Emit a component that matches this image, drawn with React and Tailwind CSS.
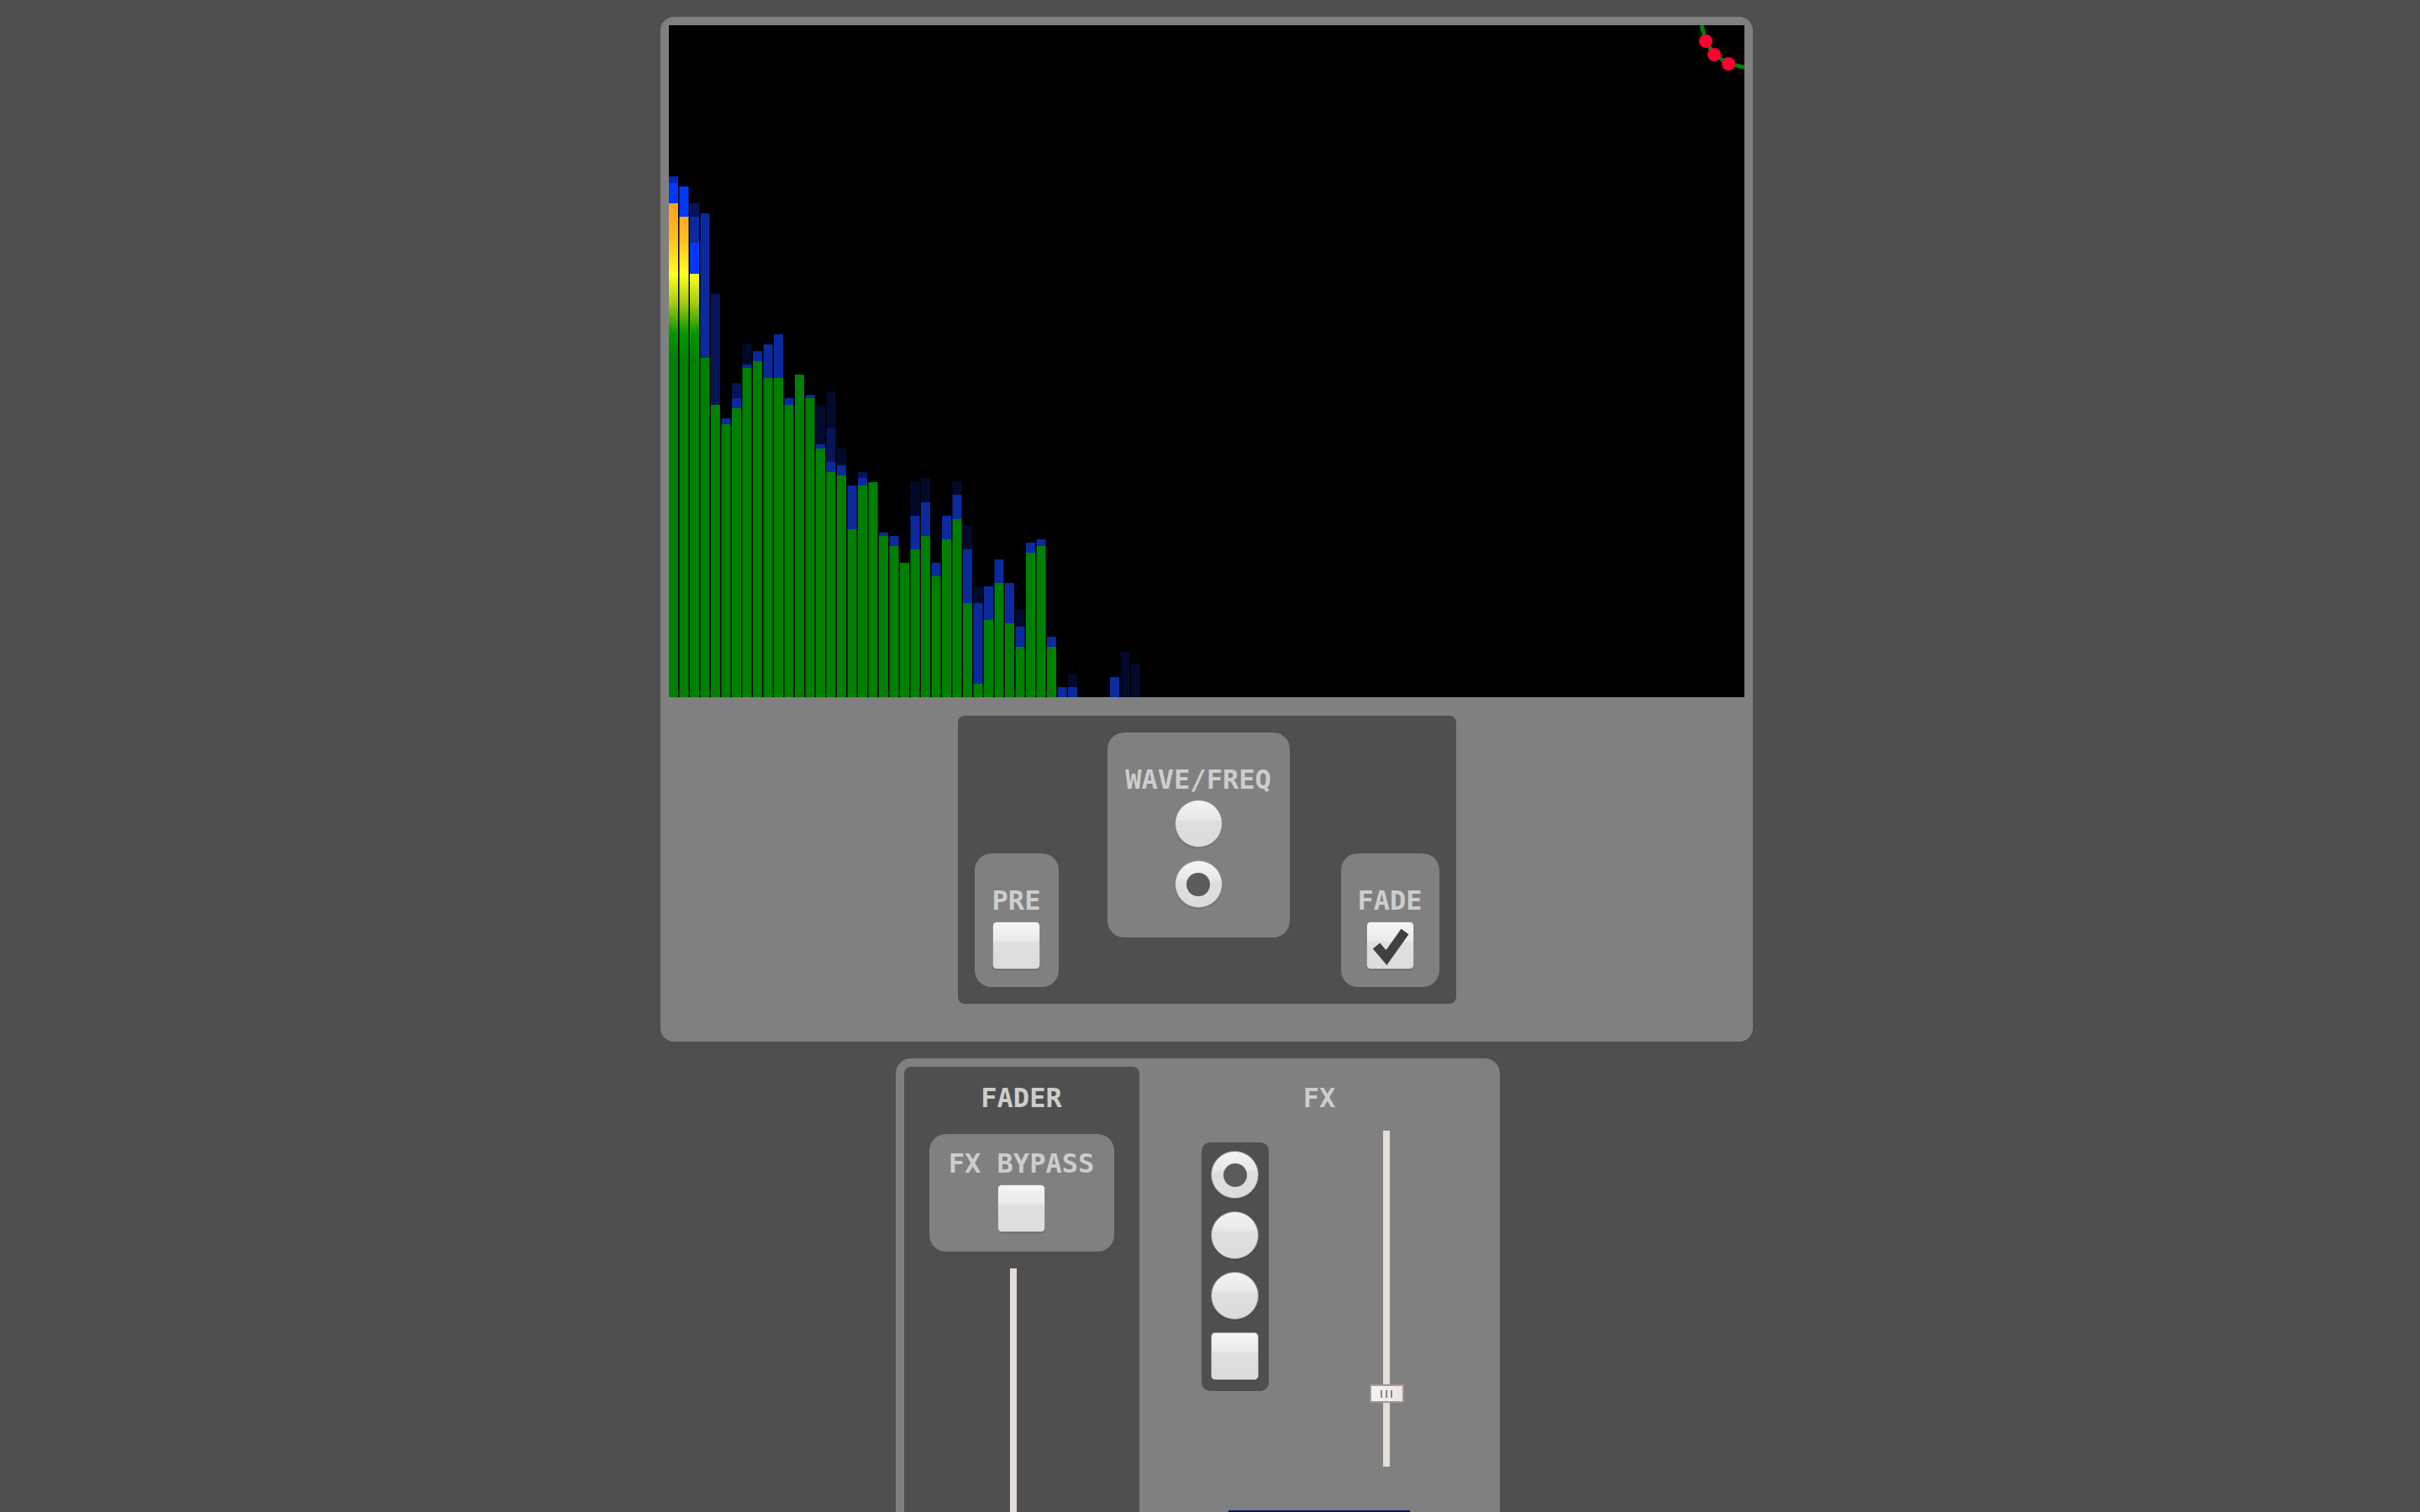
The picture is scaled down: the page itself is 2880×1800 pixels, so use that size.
import React from 'react';

const G = 'url(#spec)';
const BRIGHT = '#0038ff';
const B = '#0a2a9e';
const N = '#061458';
const D = '#020a2c';

// each bar: list of [top, fill], each segment runs to the next top (last one to the bottom)
const BARS = [
  [[180, '#0026b8'], [188, BRIGHT], [212, G]],
  [[192, BRIGHT], [228, G]],
  [[212, N], [228, B], [259, BRIGHT], [296, G]],
  [[224, B], [396, G]],
  [[320, N], [452, G]],
  [[468, B], [475, G]],
  [[426, N], [444, B], [456, G]],
  [[379, D], [404, B], [408, G]],
  [[388, B], [400, G]],
  [[380, B], [420, G]],
  [[368, B], [420, G]],
  [[444, B], [452, G]],
  [[416, G]],
  [[440, B], [444, G]],
  [[453, D], [499, B], [504, G]],
  [[436, D], [480, N], [520, B], [532, G]],
  [[504, D], [524, B], [536, G]],
  [[548, B], [600, G]],
  [[532, N], [539, B], [548, G]],
  [[544, G]],
  [[604, B], [608, G]],
  [[608, B], [620, G]],
  [[640, G]],
  [[544, D], [584, B], [624, G]],
  [[539, D], [568, B], [608, G]],
  [[640, B], [656, G]],
  [[584, B], [612, G]],
  [[544, D], [559, B], [588, G]],
  [[596, D], [624, B], [688, G]],
  [[668, D], [688, B], [784, G]],
  [[668, B], [708, G]],
  [[636, B], [664, G]],
  [[664, B], [712, G]],
  [[696, D], [716, B], [740, G]],
  [[616, B], [628, G]],
  [[612, B], [620, G]],
  [[728, B], [740, G]],
  [[788, B]],
  [[773, D], [788, B]],
  [],
  [],
  [],
  [[776, B]],
  [[746, D]],
  [[760, D]],
];

function Spectrum() {
  return (
    <svg width="1280" height="800" viewBox="0 0 1280 800" className="block bg-black">
      <defs>
        <linearGradient id="spec" gradientUnits="userSpaceOnUse" x1="0" y1="0" x2="0" y2="800">
          <stop offset={212 / 800} stopColor="#ffa020" />
          <stop offset={255 / 800} stopColor="#ffc020" />
          <stop offset={297 / 800} stopColor="#ffff20" />
          <stop offset={330 / 800} stopColor="#a8cc10" />
          <stop offset={367 / 800} stopColor="#009600" />
          <stop offset={400 / 800} stopColor="#008000" />
          <stop offset="1" stopColor="#008000" />
        </linearGradient>
      </defs>
      {BARS.map((segs, i) =>
        segs.map(([top, fill], j) => {
          const bottom = j + 1 < segs.length ? segs[j + 1][0] : 800;
          return <rect key={`${i}-${j}`} x={i * 12.5} y={top} width="11" height={bottom - top} fill={fill} />;
        })
      )}
      <polyline points="1229,0 1234,19 1244,35 1261,46 1280,50" fill="none" stroke="#008000" strokeWidth="5" />
      <circle cx="1234" cy="19" r="8" fill="#ff0030" />
      <circle cx="1244" cy="35" r="8" fill="#ff0030" />
      <circle cx="1261" cy="46" r="8" fill="#ff0030" />
    </svg>
  );
}

function Label({ children, className = '' }) {
  return <div className={`leading-[38px] whitespace-pre ${className}`}>{children}</div>;
}

function Checkbox({ checked, className = '' }) {
  return (
    <div className={`w-[57px] h-[57px] shrink-0 rounded-[5px] border border-[#8e8e8e] bg-[linear-gradient(#f5f5f5,#ebebeb_38%,#dfdfdf_44%,#dcdcdc)] shadow-[0_1px_1px_rgba(0,0,0,0.2)] ${className}`}>
      {checked && (
        <svg width="55" height="55" viewBox="0 0 55 55" className="block">
          <polyline points="11,28 23,42 45,11" fill="none" stroke="#404040" strokeWidth="11" strokeLinejoin="miter" strokeLinecap="butt" />
        </svg>
      )}
    </div>
  );
}

function Radio({ checked }) {
  return (
    <div className="w-[57px] h-[57px] shrink-0 rounded-full border border-[#8e8e8e] bg-[linear-gradient(#f3f3f3,#e9e9e9_38%,#dedede_46%,#dcdcdc)] shadow-[0_1px_1px_rgba(0,0,0,0.2)] flex items-center justify-center">
      {checked && <div className="w-[28px] h-[28px] rounded-full bg-[#5b5b5b]" />}
    </div>
  );
}

export default function App() {
  return (
    <div className="min-h-screen w-full bg-[#4f4f4f] font-['DejaVu_Sans_Mono',monospace] font-bold text-[32px] text-[#cdcdcd]">
      <div className="w-[2850px] flex flex-col items-center pt-[20px] pb-[20px]">
        {/* visualiser */}
        <section className="ml-[22px] w-[1300px] h-[1220px] rounded-[16px] bg-[#808080] p-[10px]">
          <Spectrum />
          <div className="mx-auto mt-[22px] flex h-[343px] w-[593px] items-end rounded-[8px] bg-[#4f4f4f] px-[20px] pb-[20px]">
            <div className="flex h-[159px] w-[100px] flex-col items-center rounded-[20px] bg-[#808080] pt-[37px]">
              <Label>PRE</Label>
              <Checkbox className="mt-[6px]" />
            </div>
            <div className="ml-[58px] mt-[20px] flex h-[244px] w-[217px] flex-col items-center self-start rounded-[20px] bg-[#808080] pt-[37px]">
              <Label>WAVE/FREQ</Label>
              <div className="mt-[5px] flex flex-col gap-[15px]">
                <Radio />
                <Radio checked />
              </div>
            </div>
            <div className="ml-[61px] flex h-[159px] w-[117px] flex-col items-center rounded-[20px] bg-[#808080] pt-[37px]">
              <Label>FADE</Label>
              <Checkbox checked className="mt-[6px]" />
            </div>
          </div>
        </section>

        {/* channel strip */}
        <section className="mt-[20px] flex h-[1640px] w-[719px] rounded-[18px] bg-[#808080] pl-[10px] pt-[10px] pb-[10px]">
          <div className="w-[280px] rounded-[8px] bg-[#4f4f4f] pt-[18px]">
            <Label className="text-center">FADER</Label>
            <div className="mx-auto mt-[24px] flex h-[140px] w-[220px] flex-col items-center rounded-[20px] bg-[#808080] pt-[16px]">
              <Label>FX BYPASS</Label>
              <Checkbox className="mt-[6px]" />
            </div>
            <div className="ml-[126px] mt-[20px] h-[1100px] w-[8px] bg-[#e5ddd8]" />
          </div>
          <div className="flex-1 pt-[18px]">
            <Label className="text-center">FX</Label>
            <div className="flex items-start pl-[74px]">
              <div className="mt-[34px] flex w-[80px] flex-col items-center gap-[15px] rounded-[10px] bg-[#4f4f4f] pt-[10px] pb-[13px]">
                <Radio checked />
                <Radio />
                <Radio />
                <Checkbox />
              </div>
              <div className="relative ml-[120px] mt-[20px] flex h-[400px] w-[41px] justify-center">
                <div className="h-full w-[8px] bg-[#e5ddd8]" />
                <div className="absolute left-0 top-[302px] flex h-[22px] w-[41px] items-center justify-center gap-[4px] border-2 border-[#a39892] bg-[linear-gradient(90deg,#f5f3f1,#ebe5e1)]">
                  <span className="h-[9px] w-[2px] bg-[#8e8480]" />
                  <span className="h-[9px] w-[2px] bg-[#8e8480]" />
                  <span className="h-[9px] w-[2px] bg-[#8e8480]" />
                </div>
              </div>
            </div>
            <div className="mx-auto mt-[52px] h-[240px] w-[216px] bg-[#0b1652]" />
          </div>
        </section>
      </div>
    </div>
  );
}
